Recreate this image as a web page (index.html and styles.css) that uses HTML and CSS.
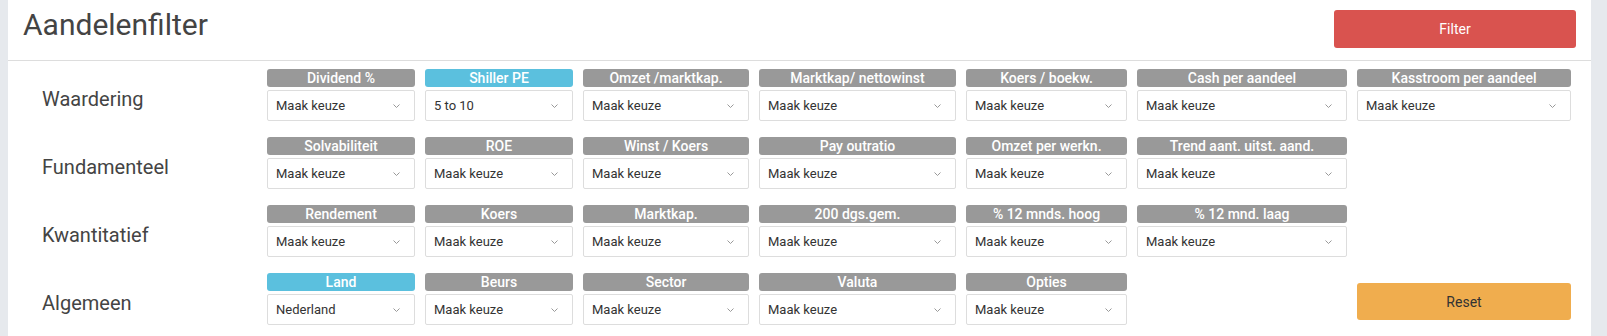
FILE: index.html
```html
<!DOCTYPE html>
<html lang="nl">

<head>
    <meta http-equiv="Content-Type" content="text/html;charset=utf-8">
    <title>Aandelenfilter</title>
    <link rel="stylesheet" href="styles.css">
</head>

<body>
    <div class="panel">
        <!-- kop -->
        <div class="head">
            <h1 class="title">Aandelenfilter</h1>
            <button class="btn btnFilter">Filter</button>
        </div>

        <div class="filters">
            <!-- Waardering -->
            <div class="group">
                <div class="groupName">Waardering</div>
                <div class="fields">
                    <div class="field">
                        <div class="tag">Dividend %</div>
                        <div class="pick"><span>Maak keuze</span><svg width="7" height="4" viewBox="0 0 7 4"><path d="M0.5 0.5L3.5 3.5L6.5 0.5" /></svg></div>
                    </div>
                    <div class="field">
                        <div class="tag on">Shiller PE</div>
                        <div class="pick"><span>5 to 10</span><svg width="7" height="4" viewBox="0 0 7 4"><path d="M0.5 0.5L3.5 3.5L6.5 0.5" /></svg></div>
                    </div>
                    <div class="field">
                        <div class="tag">Omzet /marktkap.</div>
                        <div class="pick"><span>Maak keuze</span><svg width="7" height="4" viewBox="0 0 7 4"><path d="M0.5 0.5L3.5 3.5L6.5 0.5" /></svg></div>
                    </div>
                    <div class="field">
                        <div class="tag">Marktkap/ nettowinst</div>
                        <div class="pick"><span>Maak keuze</span><svg width="7" height="4" viewBox="0 0 7 4"><path d="M0.5 0.5L3.5 3.5L6.5 0.5" /></svg></div>
                    </div>
                    <div class="field">
                        <div class="tag">Koers / boekw.</div>
                        <div class="pick"><span>Maak keuze</span><svg width="7" height="4" viewBox="0 0 7 4"><path d="M0.5 0.5L3.5 3.5L6.5 0.5" /></svg></div>
                    </div>
                    <div class="field">
                        <div class="tag">Cash per aandeel</div>
                        <div class="pick"><span>Maak keuze</span><svg width="7" height="4" viewBox="0 0 7 4"><path d="M0.5 0.5L3.5 3.5L6.5 0.5" /></svg></div>
                    </div>
                    <div class="field">
                        <div class="tag">Kasstroom per aandeel</div>
                        <div class="pick"><span>Maak keuze</span><svg width="7" height="4" viewBox="0 0 7 4"><path d="M0.5 0.5L3.5 3.5L6.5 0.5" /></svg></div>
                    </div>
                </div>
            </div>

            <!-- Fundamenteel -->
            <div class="group">
                <div class="groupName">Fundamenteel</div>
                <div class="fields">
                    <div class="field">
                        <div class="tag">Solvabiliteit</div>
                        <div class="pick"><span>Maak keuze</span><svg width="7" height="4" viewBox="0 0 7 4"><path d="M0.5 0.5L3.5 3.5L6.5 0.5" /></svg></div>
                    </div>
                    <div class="field">
                        <div class="tag">ROE</div>
                        <div class="pick"><span>Maak keuze</span><svg width="7" height="4" viewBox="0 0 7 4"><path d="M0.5 0.5L3.5 3.5L6.5 0.5" /></svg></div>
                    </div>
                    <div class="field">
                        <div class="tag">Winst / Koers</div>
                        <div class="pick"><span>Maak keuze</span><svg width="7" height="4" viewBox="0 0 7 4"><path d="M0.5 0.5L3.5 3.5L6.5 0.5" /></svg></div>
                    </div>
                    <div class="field">
                        <div class="tag">Pay outratio</div>
                        <div class="pick"><span>Maak keuze</span><svg width="7" height="4" viewBox="0 0 7 4"><path d="M0.5 0.5L3.5 3.5L6.5 0.5" /></svg></div>
                    </div>
                    <div class="field">
                        <div class="tag">Omzet per werkn.</div>
                        <div class="pick"><span>Maak keuze</span><svg width="7" height="4" viewBox="0 0 7 4"><path d="M0.5 0.5L3.5 3.5L6.5 0.5" /></svg></div>
                    </div>
                    <div class="field">
                        <div class="tag">Trend aant. uitst. aand.</div>
                        <div class="pick"><span>Maak keuze</span><svg width="7" height="4" viewBox="0 0 7 4"><path d="M0.5 0.5L3.5 3.5L6.5 0.5" /></svg></div>
                    </div>
                </div>
            </div>

            <!-- Kwantitatief -->
            <div class="group">
                <div class="groupName">Kwantitatief</div>
                <div class="fields">
                    <div class="field">
                        <div class="tag">Rendement</div>
                        <div class="pick"><span>Maak keuze</span><svg width="7" height="4" viewBox="0 0 7 4"><path d="M0.5 0.5L3.5 3.5L6.5 0.5" /></svg></div>
                    </div>
                    <div class="field">
                        <div class="tag">Koers</div>
                        <div class="pick"><span>Maak keuze</span><svg width="7" height="4" viewBox="0 0 7 4"><path d="M0.5 0.5L3.5 3.5L6.5 0.5" /></svg></div>
                    </div>
                    <div class="field">
                        <div class="tag">Marktkap.</div>
                        <div class="pick"><span>Maak keuze</span><svg width="7" height="4" viewBox="0 0 7 4"><path d="M0.5 0.5L3.5 3.5L6.5 0.5" /></svg></div>
                    </div>
                    <div class="field">
                        <div class="tag">200 dgs.gem.</div>
                        <div class="pick"><span>Maak keuze</span><svg width="7" height="4" viewBox="0 0 7 4"><path d="M0.5 0.5L3.5 3.5L6.5 0.5" /></svg></div>
                    </div>
                    <div class="field">
                        <div class="tag">% 12 mnds. hoog</div>
                        <div class="pick"><span>Maak keuze</span><svg width="7" height="4" viewBox="0 0 7 4"><path d="M0.5 0.5L3.5 3.5L6.5 0.5" /></svg></div>
                    </div>
                    <div class="field">
                        <div class="tag">% 12 mnd. laag</div>
                        <div class="pick"><span>Maak keuze</span><svg width="7" height="4" viewBox="0 0 7 4"><path d="M0.5 0.5L3.5 3.5L6.5 0.5" /></svg></div>
                    </div>
                </div>
            </div>

            <!-- Algemeen -->
            <div class="group">
                <div class="groupName">Algemeen</div>
                <div class="fields">
                    <div class="field">
                        <div class="tag on">Land</div>
                        <div class="pick"><span>Nederland</span><svg width="7" height="4" viewBox="0 0 7 4"><path d="M0.5 0.5L3.5 3.5L6.5 0.5" /></svg></div>
                    </div>
                    <div class="field">
                        <div class="tag">Beurs</div>
                        <div class="pick"><span>Maak keuze</span><svg width="7" height="4" viewBox="0 0 7 4"><path d="M0.5 0.5L3.5 3.5L6.5 0.5" /></svg></div>
                    </div>
                    <div class="field">
                        <div class="tag">Sector</div>
                        <div class="pick"><span>Maak keuze</span><svg width="7" height="4" viewBox="0 0 7 4"><path d="M0.5 0.5L3.5 3.5L6.5 0.5" /></svg></div>
                    </div>
                    <div class="field">
                        <div class="tag">Valuta</div>
                        <div class="pick"><span>Maak keuze</span><svg width="7" height="4" viewBox="0 0 7 4"><path d="M0.5 0.5L3.5 3.5L6.5 0.5" /></svg></div>
                    </div>
                    <div class="field">
                        <div class="tag">Opties</div>
                        <div class="pick"><span>Maak keuze</span><svg width="7" height="4" viewBox="0 0 7 4"><path d="M0.5 0.5L3.5 3.5L6.5 0.5" /></svg></div>
                    </div>
                    <button class="btn btnReset">Reset</button>
                </div>
            </div>
        </div>
    </div>
</body>

</html>
```

FILE: styles.css
```css
* {
    margin: 0;
    padding: 0;
    box-sizing: border-box;
}

html,
body {
    font-family: Roboto, "Liberation Sans", Arial, sans-serif;
    font-size: 14px;
    color: #333;
}

body {
    background-color: #e6e9ed;
}

.panel {
    width: 1583px;
    min-height: 336px;
    margin-left: 8px;
    background-color: #fff;
}

/* kop */
.head {
    height: 61px;
    padding: 0 15px;
    display: flex;
    justify-content: space-between;
    align-items: flex-start;
    border-bottom: 1px solid #ddd;
}

.head .title {
    margin-top: 7px;
    font-size: 30px;
    line-height: 36px;
    font-weight: 400;
    color: #444;
}

.btn {
    border: none;
    border-radius: 3px;
    font-family: inherit;
    font-size: 14px;
    cursor: pointer;
}

.btnFilter {
    width: 242px;
    height: 38px;
    margin-top: 10px;
    background-color: #d9534f;
    color: #fff;
}

.btnReset {
    grid-column: 7;
    height: 37px;
    margin-top: 10px;
    background-color: #f0ad4e;
    color: #333;
}

/* filters */
.filters {
    padding: 8px 20px 0 34px;
    display: flex;
    flex-direction: column;
    gap: 16px;
}

.group {
    display: flex;
}

.group .groupName {
    width: 225px;
    padding-top: 18px;
    font-size: 20px;
    line-height: 24px;
    color: #444;
}

.group .fields {
    display: grid;
    grid-template-columns: 148px 148px 166px 197px 161px 210px 214px;
    column-gap: 10px;
    align-items: start;
}

.field .tag {
    height: 18px;
    margin-bottom: 3px;
    border-radius: 3px;
    background-color: #999;
    color: #fff;
    font-size: 14px;
    font-weight: 500;
    line-height: 18px;
    text-align: center;
    white-space: nowrap;
}

.field .tag.on {
    background-color: #5bc0de;
}

.field .pick {
    height: 31px;
    padding: 0 14px 0 8px;
    display: flex;
    justify-content: space-between;
    align-items: center;
    border: 1px solid #ddd;
    border-radius: 2px;
    font-size: 13px;
    color: #333;
}

.field .pick svg path {
    fill: none;
    stroke: #999;
    stroke-width: 1;
}
```
